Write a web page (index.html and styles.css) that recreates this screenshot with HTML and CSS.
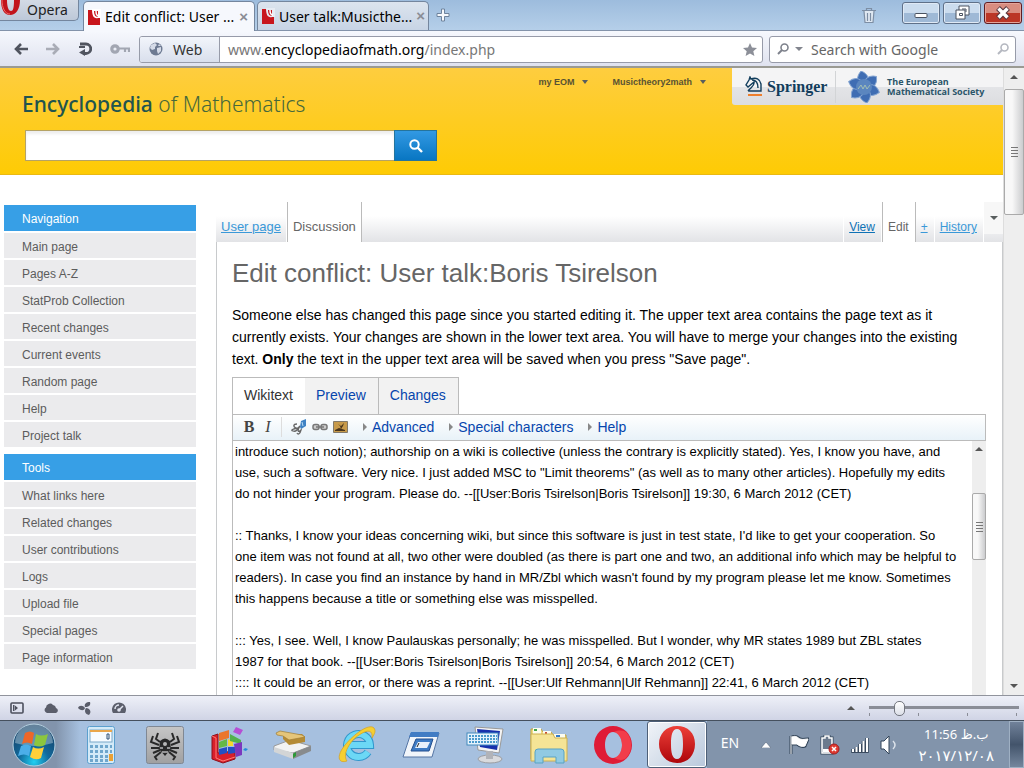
FILE: index.html
```html
<!DOCTYPE html>
<html lang="en">
<head>
<meta charset="utf-8">
<title>Edit conflict: User talk:Boris Tsirelson</title>
<link rel="stylesheet" href="styles.css">
</head>
<body>
<div class="desktop">
  <header class="titlebar">
    <button class="opera-menu"><svg width="22" height="16" viewBox="0 0 22 16"><path d="M1 0C1 9 4 15 10 15S20 9 20 0H14C14 8 13 11 11 11S7 8 7 0Z" fill="#c2141b"/><path d="M2 0C2 8 5 14 10 14" fill="none" stroke="#ef6b6b"/></svg>Opera</button>
    <div class="tab tab-active"><svg class="favicon" width="13" height="16" viewBox="0 0 13 16"><path d="M0 1H12V16H0Z" fill="#c8151c"/><path d="M4 0H13V9H10C6 10 4 7 4 0Z" fill="#fff"/><path d="M6 2H10V8C7 8 6 5 6 2Z" fill="#c8151c"/><path d="M8 2C8 5 9 7 11 7" fill="none" stroke="#fff" stroke-width="1.500"/></svg><span>Edit conflict: User ...</span><button class="tab-close" aria-label="Close tab">×</button></div>
    <div class="tab"><svg class="favicon" width="13" height="16" viewBox="0 0 13 16"><path d="M0 1H12V16H0Z" fill="#c8151c"/><path d="M4 0H13V9H10C6 10 4 7 4 0Z" fill="#e6ebf3"/><path d="M6 2H10V8C7 8 6 5 6 2Z" fill="#c8151c"/><path d="M8 2C8 5 9 7 11 7" fill="none" stroke="#fff" stroke-width="1.500"/></svg><span>User talk:Musicthe...</span><button class="tab-close" aria-label="Close tab">×</button></div>
    <button class="plain new-tab" aria-label="New tab"><svg width="14" height="14" viewBox="0 0 14 14"><path d="M5.500 1H8.500V5.500H13V8.500H8.500V13H5.500V8.500H1V5.500H5.500Z" fill="#f5f8fc" stroke="#6d829c"/></svg></button>
    <button class="plain trash" aria-label="Closed tabs"><svg width="16" height="17" viewBox="0 0 16 17"><path d="M3 4H13L12 16H4Z" fill="#dfe8f2"/><path d="M1 3.500H15M5.500 3V1.500H10.500V3M3 4L4 15.500H12L13 4M6.500 6V14M9.500 6V14" fill="none" stroke="#7d8ea4" stroke-width="1.200"/></svg></button>
    <div class="window-buttons">
      <button class="winbtn" aria-label="Minimize"><svg width="18" height="18" viewBox="0 0 18 18"><rect x="3" y="9.500" width="12" height="4" rx="1" fill="#fff" stroke="#4a5260"/></svg></button>
      <button class="winbtn" aria-label="Restore"><svg width="18" height="18" viewBox="0 0 18 18"><path d="M6 2H16V11H12V15H3V6H6Z" fill="#fff" stroke="#4a5260"/><path d="M6 6H12V11M9 5H13V8M6.500 9.500H9.500V11.500H6.500Z" fill="none" stroke="#4a5260"/></svg></button>
      <button class="winbtn winbtn-close" aria-label="Close"><svg width="18" height="18" viewBox="0 0 18 18"><path d="M4 4L14 14M14 4L4 14" stroke="#54343c" stroke-width="5.500"/><path d="M4.500 4.500L13.500 13.500M13.500 4.500L4.500 13.500" stroke="#fff" stroke-width="3.500"/></svg></button>
    </div>
  </header>

  <div class="addressbar">
    <button class="plain" aria-label="Back"><svg width="14" height="12" viewBox="0 0 14 12"><path d="M7 1L2 6L7 11M2 6H14" fill="none" stroke="#50545f" stroke-width="2.600"/></svg></button>
    <button class="plain" aria-label="Forward"><svg width="14" height="12" viewBox="0 0 14 12"><path d="M7 1L12 6L7 11M12 6H0" fill="none" stroke="#a9acb6" stroke-width="2.600"/></svg></button>
    <button class="plain" aria-label="Reload"><svg width="14" height="14" viewBox="0 0 14 14"><path d="M2 2H8A4.500 4.500 0 0 1 8 11.500H5" fill="none" stroke="#50545f" stroke-width="2.800"/><path d="M7 7V14L1 10.500Z" fill="#50545f"/><path d="M1 5H7" stroke="#50545f" stroke-width="2"/></svg></button>
    <button class="plain" aria-label="Key"><svg width="20" height="10" viewBox="0 0 20 10"><circle cx="5" cy="5" r="3.200" fill="none" stroke="#a2a6b2" stroke-width="3.200"/><path d="M8 4.500H19V8M15 5V8" fill="none" stroke="#a2a6b2" stroke-width="2.200"/></svg></button>
    <div class="field field-url">
      <button class="web-button"><svg width="14" height="14" viewBox="0 0 14 14"><circle cx="7" cy="7" r="6.500" fill="#6d7a92"/><path d="M2 3L6 1L8 3L6 5L6 7L3 8L1 6ZM8 6L12 5L12 9L9 12L8 9ZM10 2L12 4H9Z" fill="#d5dbe8"/></svg>Web</button>
      <span class="url">www.<b>encyclopediaofmath.org</b>/index.php</span>
      <button class="plain" aria-label="Bookmark"><svg width="14" height="13" viewBox="0 0 14 13"><path d="M7 0L9 4.500L14 5L10.300 8.300L11.400 13L7 10.500L2.600 13L3.700 8.300L0 5L5 4.500Z" fill="#8c8f98"/></svg></button>
    </div>
    <div class="field field-search">
      <svg width="12" height="12" viewBox="0 0 12 12"><circle cx="7.500" cy="4.500" r="3.500" fill="none" stroke="#7e828c" stroke-width="1.600"/><path d="M5 7L1 11" stroke="#7e828c" stroke-width="2"/></svg>
      <svg width="8" height="4" viewBox="0 0 8 4"><path d="M0 0H8L4 4Z" fill="#82858e"/></svg>
      <input type="text" class="google" placeholder="Search with Google" aria-label="Search with Google">
      <svg width="12" height="12" viewBox="0 0 12 12"><circle cx="7.500" cy="4.500" r="3.500" fill="none" stroke="#b5b8c0" stroke-width="1.600"/><path d="M5 7L1 11" stroke="#b5b8c0" stroke-width="2"/></svg>
    </div>
  </div>

  <div class="viewport">
    <div class="page">
      <header class="site-header">
        <div class="brand">
          <div class="site-name"><b>Encyclopedia</b> of Mathematics</div>
          <form class="site-search"><input type="text" aria-label="Search the encyclopedia"><button type="button" aria-label="Search"><svg width="14" height="14" viewBox="0 0 14 14"><circle cx="5.500" cy="5.500" r="4.200" fill="none" stroke="#fff" stroke-width="2"/><path d="M8.500 8.500L13 13" stroke="#fff" stroke-width="2.400"/></svg></button></form>
        </div>
        <div class="user-menus"><button class="menu">my EOM<i class="caret"></i></button><button class="menu">Musictheory2math<i class="caret"></i></button></div>
        <div class="partners">
          <a href="#" class="springer"><svg width="18" height="21" viewBox="0 0 18 21"><path d="M3 15H16V8C15 3 11 1 6 3L5 1L4 4L1 9L3 11L9 6C10 10 6 11 3 15M7 4C12 4 13 8 13 12" fill="none" stroke="#123d5c" stroke-width="1.400"/><path d="M3 19H17" stroke="#ee7f2d" stroke-width="2"/></svg>Springer</a>
          <a href="#" class="ems"><svg width="34" height="32" viewBox="0 0 34 32"><defs><path id="petal" d="M17 16C9 12 9 6 14 0C22 3 24 10 17 16Z"/></defs><g fill="#3f6db3" stroke="#86a6d2" stroke-width="1"><use href="#petal"/><use href="#petal" transform="rotate(60 17 16)"/><use href="#petal" transform="rotate(120 17 16)"/><use href="#petal" transform="rotate(180 17 16)"/><use href="#petal" transform="rotate(240 17 16)"/><use href="#petal" transform="rotate(300 17 16)"/></g><circle cx="17" cy="16" r="8" fill="#5b86bf"/><path d="M11 18L14 14L16 18L18 14L20 18L23 14" fill="none" stroke="#a3bfb4"/></svg><span>The European<br>Mathematical Society</span></a>
        </div>
      </header>
      <div class="columns">
        <nav class="sidebar">
          <h2>Navigation</h2>
          <ul><li><a href="#">Main page</a></li><li><a href="#">Pages A-Z</a></li><li><a href="#">StatProb Collection</a></li><li><a href="#">Recent changes</a></li><li><a href="#">Current events</a></li><li><a href="#">Random page</a></li><li><a href="#">Help</a></li><li><a href="#">Project talk</a></li></ul>
          <h2>Tools</h2>
          <ul><li><a href="#">What links here</a></li><li><a href="#">Related changes</a></li><li><a href="#">User contributions</a></li><li><a href="#">Logs</a></li><li><a href="#">Upload file</a></li><li><a href="#">Special pages</a></li><li><a href="#">Page information</a></li></ul>
        </nav>
        <main class="main">
          <div class="page-tabs">
            <div class="namespaces"><a href="#" class="ptab">User page</a><a href="#" class="ptab ptab-on">Discussion</a></div>
            <span class="grow"></span>
            <div class="views"><a href="#" class="ptab ptab-view">View</a><a href="#" class="ptab ptab-on">Edit</a><a href="#" class="ptab">+</a><a href="#" class="ptab">History</a></div><button class="more" aria-label="More actions"><i class="caret"></i></button>
          </div>
          <div class="content">
            <h1>Edit conflict: User talk:Boris Tsirelson</h1>
            <p>Someone else has changed this page since you started editing it. The upper text area contains the page text as it currently exists. Your changes are shown in the lower text area. You will have to merge your changes into the existing text. <b>Only</b> the text in the upper text area will be saved when you press "Save page".</p>
            <div class="editor-tabs"><button class="etab etab-on">Wikitext</button><button class="etab">Preview</button><button class="etab">Changes</button></div>
            <div class="toolbar">
              <button class="plain bold" aria-label="Bold">B</button><button class="plain italic" aria-label="Italic">I</button><span class="divider"></span>
              <button class="plain" aria-label="Signature"><svg width="16" height="16" viewBox="0 0 16 16"><path d="M6 5C2 5 2 8 5 9S5 13 2 12S2 10 7 9L9 7C6 12 7 14 10 11C9 15 7 16 6 14" fill="none" stroke="#666" stroke-width="1.300"/><path d="M10 2L15 0V7L10 10L9 8Z" fill="#3f82c4"/><path d="M11 3L12 7" stroke="#b9dcf4"/></svg></button>
              <button class="plain" aria-label="Link"><svg width="16" height="8" viewBox="0 0 16 8"><rect x="1" y="1.500" width="6" height="5" rx="2" fill="#ccc" stroke="#777" stroke-width="1.500"/><rect x="9" y="1.500" width="6" height="5" rx="2" fill="#ccc" stroke="#777" stroke-width="1.500"/><path d="M4 4H12" stroke="#777" stroke-width="1.500"/></svg></button>
              <button class="plain" aria-label="Embedded file"><svg width="15" height="12" viewBox="0 0 15 12"><path d="M.500 .500H14.500V11.500H.500Z" fill="#c79a4a" stroke="#827a6b"/><path d="M2 9L6 7L12 9V10H2ZM5 3L8 5L11 2L10 5L8 8L7 5Z" fill="#49351c"/></svg></button>
              <a href="#" class="section">Advanced</a><a href="#" class="section">Special characters</a><a href="#" class="section">Help</a>
            </div>
            <div class="edit-area">
              <textarea aria-label="Page text" wrap="off">introduce such notion); authorship on a wiki is collective (unless the contrary is explicitly stated). Yes, I know you have, and
use, such a software. Very nice. I just added MSC to "Limit theorems" (as well as to many other articles). Hopefully my edits
do not hinder your program. Please do. --[[User:Boris Tsirelson|Boris Tsirelson]] 19:30, 6 March 2012 (CET)

:: Thanks, I know your ideas concerning wiki, but since this software is just in test state, I'd like to get your cooperation. So
one item was not found at all, two other were doubled (as there is part one and two, an additional info which may be helpful to
readers). In case you find an instance by hand in MR/Zbl which wasn't found by my program please let me know. Sometimes
this happens because a title or something else was misspelled.

::: Yes, I see. Well, I know Paulauskas personally; he was misspelled. But I wonder, why MR states 1989 but ZBL states
1987 for that book. --[[User:Boris Tsirelson|Boris Tsirelson]] 20:54, 6 March 2012 (CET)
:::: It could be an error, or there was a reprint. --[[User:Ulf Rehmann|Ulf Rehmann]] 22:41, 6 March 2012 (CET)</textarea>
              <div class="scroll scroll-inner"><i class="arrow-up"></i><div class="thumb"><i class="grip"></i></div></div>
            </div>
          </div>
        </main>
      </div>
    </div>
    <div class="scroll scroll-page"><i class="arrow-up"></i><div class="thumb"><i class="grip"></i></div><i class="arrow-down"></i></div>
  </div>

  <footer class="statusbar">
    <button class="plain" aria-label="Panels"><svg width="14" height="12" viewBox="0 0 14 12"><rect x="1" y="1" width="12" height="10" rx="1" fill="none" stroke="#4d505e" stroke-width="1.600"/><path d="M3 3H4.500V9H3ZM5 3.500L8 6L5 8.500Z" fill="#4d505e"/></svg></button>
    <button class="plain" aria-label="Sync"><svg width="14" height="10" viewBox="0 0 14 10"><path d="M3 10A3 3 0 0 1 2 4.500A4 4 0 0 1 9 2A3.500 3.500 0 0 1 12 5A2.600 2.600 0 0 1 12 10Z" fill="#5b5e6b"/></svg></button>
    <button class="plain" aria-label="Share"><svg width="14" height="13" viewBox="0 0 14 13"><path d="M7 5C6 2 8 0 12 0C13 3 11 5 7 5ZM7 6C6 9 3 9 0 6C1 3 5 3 7 6ZM8 6C12 6 14 10 11 13C7 12 6 9 8 6Z" fill="#5b5e6b"/></svg></button>
    <button class="plain" aria-label="Turbo"><svg width="14" height="12" viewBox="0 0 14 12"><path d="M1 11A7 7 0 1 1 13 11Z" fill="#5b5e6b"/><path d="M3 7A4 4 0 0 1 7 3M7 8L11 4" fill="none" stroke="#e1e4f0" stroke-width="1.500"/><circle cx="7" cy="8" r="1.800" fill="#e1e4f0"/></svg></button>
    <span class="grow"></span>
    <i class="arrow-up"></i>
    <input type="range" class="zoom" min="0" max="100" value="18" aria-label="Zoom">
  </footer>

  <div class="taskbar">
    <button class="start" aria-label="Start"><svg width="44" height="44" viewBox="0 0 44 44"><defs><radialGradient id="orb" cx=".5" cy=".9" r=".9"><stop offset="0" stop-color="#22d0f2"/><stop offset=".4" stop-color="#126a9d"/><stop offset="1" stop-color="#163a5e"/></radialGradient></defs><circle cx="22" cy="22" r="21" fill="url(#orb)" stroke="#b4d0e1"/><path d="M3 20A19 19 0 0 1 41 20Q22 26 3 20Z" fill="#c4d7e3" opacity=".45"/><path d="M13 10Q18 7 22 10L20 21Q15 18 10 21Z" fill="#ee6728"/><path d="M24 11Q29 14 36 11L33 22Q27 25 22 22Z" fill="#8cc63e"/><path d="M9 23Q14 20 19 23L17 33Q12 30 6 33Z" fill="#4baee9"/><path d="M21 24Q26 27 32 24L29 35Q24 38 18 34Z" fill="#ffd03a"/></svg></button>
    <button class="task" aria-label="Calculator"><svg width="28" height="38" viewBox="0 0 28 38"><rect x=".5" y=".5" width="27" height="37" rx="2" fill="#d4eaf8" stroke="#5a9fce"/><rect x="3" y="4" width="22" height="12" fill="#f7fbff" stroke="#78a7c8"/><path d="M3 4H25V6H3Z" fill="#eaa64a"/><path d="M20 8H22V13H20Z" fill="none" stroke="#315174"/><path d="M3 20.500H25M3 25.500H25M3 30.500H21M3 34.500H21" stroke="#6fa6cc" stroke-width="3" stroke-dasharray="3 2"/><rect x="22" y="28" width="4" height="7" fill="#eaa135"/></svg></button>
    <button class="task" aria-label="Antivirus"><svg width="38" height="38" viewBox="0 0 38 38"><defs><linearGradient id="steel" x2="0" y2="1"><stop stop-color="#c6c6c6"/><stop offset="1" stop-color="#a0a0a1"/></linearGradient></defs><rect x=".5" y=".5" width="37" height="37" rx="2" fill="url(#steel)" stroke="#808893"/><g fill="none" stroke="#292929" stroke-width="2"><path d="M14 16L10 13L12 7M24 16L28 13L26 7M13 19L5 16L7 10M25 19L33 16L31 10M13 22H5M25 22H33M14 24L7 27M24 24L31 27M15 26L9 31L11 34M23 26L29 31L27 34"/></g><path d="M14 15Q19 10 24 15L25 23L19 30L13 23Z" fill="#292929"/><path d="M14 22H17M21 22H24M16 26H22" stroke="#b7b7b8" stroke-width="1.500"/><circle cx="19" cy="18" r="2" fill="#b7b7b8"/></svg></button>
    <button class="task" aria-label="Defragmenter"><svg width="38" height="38" viewBox="0 0 38 38"><path d="M2 10L8 8V27L25 25V33L13 37L2 33Z" fill="#d91f2b" stroke="#8e101b"/><path d="M2 10L6 12V32L13 35L25 31" fill="none" stroke="#ff7b72"/><path d="M9 7L19 4V12L9 15Z" fill="#eb762d"/><path d="M9 16L17 13V20L9 22Z" fill="#65b946"/><path d="M18 13L23 15V20L18 20Z" fill="#f6d62e"/><path d="M9 23L17 21V27L9 29ZM18 21H25V27L18 28Z" fill="#244fc3"/><path d="M20 8L31 14V18L20 15Z" fill="#53b14b"/><path d="M26 1L33 4L30 9L23 6Z" fill="#b64fd4"/><path d="M24 18L32 16V29L26 31Z" fill="#7b38be"/><path d="M35 22L38 23L36 25L33 24Z" fill="#248bdc"/></svg></button>
    <button class="task" aria-label="Drive"><svg width="40" height="30" viewBox="0 0 40 30"><path d="M1 16L17 10L38 16L20 23L1 20Z" fill="#f2f3f3" stroke="#999"/><path d="M1 17V22L20 29V23Z" fill="#d3d5d6"/><path d="M20 23L38 16V21L20 29Z" fill="#888b8d"/><path d="M10 5L29 4L32 7V12L16 15L10 9Z" fill="#b48b35"/><path d="M3 3L7 1L29 5L32 7L16 10L10 6L4 5Z" fill="#e5c579" stroke="#a17d34" stroke-width=".7"/><path d="M20 24L23 22V26L20 28Z" fill="#2c9b36"/></svg></button>
    <button class="task" aria-label="Internet Explorer"><svg width="40" height="40" viewBox="0 0 40 40"><path d="M31 27A11.500 11.500 0 1 1 33 20H12" fill="none" stroke="#3197cd" stroke-width="8"/><path d="M31 27A11.500 11.500 0 1 1 33 20H12" fill="none" stroke="#6cd8f5" stroke-width="6"/><path d="M10 36C1 39 -1 31 8 20S32 -2 37 3C39 6 38 8 35 13C36 5 31 4 22 10S5 29 10 36Z" fill="#f5cf32" stroke="#d5a11f" stroke-width=".7"/></svg></button>
    <button class="task" aria-label="Run"><svg width="38" height="28" viewBox="0 0 38 28"><path d="M9 2H37L30 26H1Z" fill="#f1f5fa" stroke="#5575a4"/><path d="M9 1H37L36 6H7Z" fill="#417cc4"/><path d="M14 8H31L27 20H9Z" fill="#3d7bc4" stroke="#244f8e"/><path d="M16 11H28L25 17H13Z" fill="#e8f1fb"/><path d="M17 12L15 16" stroke="#222"/></svg></button>
    <button class="task" aria-label="On-screen keyboard"><svg width="38" height="38" viewBox="0 0 38 38"><path d="M9 1L37 3L33 27L12 24Z" fill="#f4f4f4" stroke="#999"/><path d="M11 3L34 5L31 24L14 21Z" fill="#1730ac"/><ellipse cx="24" cy="33" rx="12" ry="4" fill="#d9dadd" stroke="#9b9da2"/><path d="M20 25H27V33H20Z" fill="#b1b3b8"/><rect x="1" y="7" width="31" height="12" fill="#e6f3fc" stroke="#438abd"/><path d="M3 10H31M3 13H31M3 16H31" stroke="#4a9acc" stroke-width="2" stroke-dasharray="2 1"/></svg></button>
    <button class="task" aria-label="Explorer"><svg width="40" height="38" viewBox="0 0 40 38"><path d="M2 3H12L14 6H22L24 9H37V33H2Z" fill="#f0dc83" stroke="#c2a33f"/><path d="M4 2H12V8H4ZM14 5H22V9H14ZM25 8H36V12H25Z" fill="#fcfcef"/><path d="M5 3H8V5H5Z" fill="#41a447"/><path d="M16 6H18V8H16Z" fill="#cc4e37"/><path d="M27 9H31V11H27Z" fill="#347bc8"/><path d="M2 8H24L26 12H38V35H2Z" fill="#f5e496" stroke="#ccb050"/><path d="M6 37V26Q6 23 9 23H32Q35 23 35 26V37H27V31H14V37Z" fill="#91cae3" stroke="#59a3c3"/></svg></button>
    <button class="task" aria-label="Opera"><svg width="40" height="40" viewBox="0 0 40 40"><path fill-rule="evenodd" d="M20 1A19 19 0 1 0 20 39A19 19 0 1 0 20 1ZM20 7C25 7 29 13 29 20S25 33 20 33S12 27 12 20S15 7 20 7Z" fill="#df1b36"/><path d="M21 7C27 4 31 6 33 7A19 19 0 0 1 33 33C31 35 27 36 21 33C27 31 29 25 29 20S27 9 21 7Z" fill="#ff5559" opacity=".6"/></svg></button>
    <button class="task task-active" aria-label="Opera browser"><svg width="38" height="40" viewBox="0 0 38 40"><defs><linearGradient id="red" x2="0" y2="1"><stop stop-color="#ed4038"/><stop offset="1" stop-color="#ad050b"/></linearGradient></defs><path fill-rule="evenodd" d="M19 1C8 1 1 9 1 19S8 38 19 38S37 30 37 19S30 1 19 1ZM19 4C24 4 25 11 25 19S24 34 19 34S13 27 13 19S14 4 19 4Z" fill="url(#red)"/></svg></button>
    <div class="tray">
      <button class="plain lang">EN</button>
      <button class="plain hidden-icons" aria-label="Show hidden icons"><svg width="10" height="6" viewBox="0 0 10 6"><path d="M0 6L5 0L10 6Z" fill="#fff" stroke="#45576d" stroke-width=".5"/></svg></button>
      <button class="plain" aria-label="Action center"><svg width="20" height="20" viewBox="0 0 20 20"><path d="M2 1V19M3 2C7 0 9 3 11 4C14 5 16 4 19 4L16 11C13 12 10 11 8 9L3 9Z" fill="#fff" stroke="#334559" stroke-width="3"/><path d="M2 1V19M3 2C7 0 9 3 11 4C14 5 16 4 19 4L16 11C13 12 10 11 8 9L3 9Z" fill="#fff" stroke="#fff" stroke-width="1"/></svg></button>
      <button class="plain" aria-label="Battery"><svg width="20" height="20" viewBox="0 0 20 20"><path d="M2 3H5V1H9V3H12V18H2Z" fill="#6b7a8d" stroke="#334559" stroke-width="3"/><path d="M2 3H5V1H9V3H12V18H2Z" fill="#6b7a8d" stroke="#fff" stroke-width="1.500"/><path d="M3 14H11V17H3Z" fill="#fff"/><circle cx="14" cy="14" r="5" fill="#df3b31" stroke="#a41d20"/><path d="M12 12L16 16M16 12L12 16" stroke="#fff" stroke-width="1.500"/></svg></button>
      <button class="plain" aria-label="Network"><svg width="18" height="16" viewBox="0 0 18 16"><path d="M2 16V12M5.500 16V10M9 16V7M12.500 16V4M16 16V1" stroke="#39495d" stroke-width="3.500"/><path d="M2 15V12M5.500 15V10M9 15V7M12.500 15V4M16 15V1" stroke="#fff" stroke-width="2"/></svg></button>
      <button class="plain" aria-label="Volume"><svg width="18" height="20" viewBox="0 0 18 20"><path d="M1 6H4L9 1V19L4 14H1Z" fill="#fff" stroke="#334559"/><path d="M13 6Q17 10 13 14" fill="none" stroke="#dbe2ea" stroke-width="1.500"/></svg></button>
      <button class="clock" dir="rtl"><span>ب.ظ 11:56</span><span class="date">۲۰۱۷/۱۲/۰۸</span></button>
      <button class="show-desktop" aria-label="Show desktop"></button>
    </div>
  </div>
</div>
</body>
</html>
```
FILE: styles.css
```css
* { box-sizing: border-box; }
body { margin: 0; font-family: "Liberation Sans", Arial, sans-serif; color: #000; background: #fff; }
button, input, textarea { font: inherit; margin: 0; }
button { cursor: pointer; padding: 0; }
svg { display: block; flex: none; }
h1, h2, p, ul { margin: 0; padding: 0; font-weight: normal; }
ul { list-style: none; }
.desktop { display: flex; flex-direction: column; height: 100vh; overflow: hidden; }
.grow { flex: 1; }
.plain { border: 0; background: none; display: flex; align-items: center; justify-content: center; flex: none; }

/* Browser chrome */
.titlebar { display: flex; flex: none; height: 31px; align-items: flex-end; background: linear-gradient(#9dbcdd, #b5cfe9); border-bottom: 1px solid #8393aa; font-family: "Noto Sans", sans-serif; font-size: 14px; padding-right: 2px; }
.opera-menu { align-self: flex-start; display: flex; align-items: flex-start; gap: 5px; width: 79px; height: 21px; margin-right: 4px; border: 1px solid #74869e; border-top: 0; border-left: 0; border-radius: 0 0 5px 0; background: linear-gradient(#d3dae5, #bdc8d8); color: #222; line-height: 20px; }
.tab { display: flex; align-items: center; gap: 4px; width: 172px; height: 29px; margin-right: 2px; padding: 0 6px 0 4px; border: 1px solid #74869e; border-bottom: 0; border-radius: 5px 5px 0 0; background: linear-gradient(#dce4ee, #c7d4e5); white-space: nowrap; }
.tab-active { background: #f6f8fd; margin-bottom: -1px; height: 30px; }
.tab span { flex: 1; }
.tab-close { border: 0; background: none; color: #8a8d95; font: bold 15px/20px "Liberation Sans", sans-serif; }
.new-tab { align-self: center; margin-left: 5px; }
.trash { align-self: center; margin-left: auto; margin-right: 25px; }
.window-buttons { display: flex; gap: 3px; align-self: flex-start; padding-top: 2px; }
.winbtn { width: 38px; height: 22px; display: flex; align-items: center; justify-content: center; border: 1px solid #5f7088; border-radius: 3px; background: linear-gradient(#cbdcee 48%, #9fb9d6 52%); box-shadow: inset 0 0 0 1px #dfe9f5; }
.winbtn-close { background: linear-gradient(#d98d80 48%, #bb3626 52%); border-color: #601d22; box-shadow: inset 0 0 0 1px #e3a59b; }
.addressbar { display: flex; flex: none; align-items: center; height: 37px; padding: 1px 8px 0 14px; gap: 18px; background: linear-gradient(#f6f8fd, #dfe2ef); border-bottom: 2px solid #9a9a93; font-family: "Noto Sans", sans-serif; font-size: 14px; }
.field { display: flex; align-items: center; height: 27px; border: 1px solid #979ba9; border-radius: 3px; background: #fff; overflow: hidden; }
.field-url { flex: 1; margin-left: -9px; padding-right: 5px; }
.field-search { flex: none; width: 247px; margin-left: -12px; padding: 0 6px 0 7px; gap: 6px; }
.web-button { display: flex; align-items: center; gap: 10px; width: 80px; height: 100%; padding-left: 9px; border: 0; border-right: 1px solid #979ba9; background: linear-gradient(#f2f5fb, #d9dfec); color: #333; }
.url { flex: 1; padding-left: 8px; color: #777; }
.url b { font-weight: normal; color: #000; }
.google { flex: 1; min-width: 0; border: 0; padding: 0 0 0 2px; background: none; outline: 0; }
.google::placeholder { color: #666; opacity: 1; }

.viewport { flex: 1; min-height: 0; display: flex; }
.page { flex: 1; min-width: 0; display: flex; flex-direction: column; }

/* Site header */
.site-header { flex: none; display: flex; align-items: flex-start; height: 107px; background: linear-gradient(#fecd3f, #fecb04); border-bottom: 1px solid #eab913; }
.brand { flex: 1; padding: 23px 0 0 25px; }
.site-name { margin-left: -3px; font: 21px/26px "Noto Sans", sans-serif; font-weight: 300; color: #46683b; white-space: nowrap; }
.site-name b { font-weight: 500; color: #21544f; }
.site-search { display: flex; width: 412px; height: 31px; margin-top: 13px; }
.site-search input { flex: 1; min-width: 0; border: 1px solid #b5a365; border-right: 0; background: #fff; box-shadow: inset 0 3px 3px #eee; }
.site-search button { width: 43px; display: flex; align-items: center; justify-content: center; border: 1px solid #24749d; background: linear-gradient(#3299e3, #0876c2); }
.user-menus { display: flex; gap: 24px; padding: 7px 26px 0 0; }
.menu { display: flex; align-items: center; gap: 8px; border: 0; background: none; color: #595233; font-size: 9px; line-height: 14px; font-weight: bold; }
.caret { display: block; border: 3px solid transparent; border-top: 4px solid #595e5e; border-bottom: 0; }
.partners { display: flex; align-items: center; height: 37px; width: 271px; background: linear-gradient(#f4f4f5 50%, #e3e4e7 52%, #dcdde0); border-radius: 0 0 0 3px; }
.partners a { display: flex; align-items: center; text-decoration: none; color: #123d5c; height: 32px; }
.springer { width: 104px; padding-left: 13px; gap: 4px; font: bold 16px/24px "Liberation Serif", serif; border-right: 1px solid #d2d4d6; }
.ems { padding-left: 11px; gap: 6px; font: bold 9px/10px "Open Sans", sans-serif; white-space: nowrap; }
.partners .ems { color: #2b5569; }

/* Body columns */
.columns { flex: 1; min-height: 0; display: flex; gap: 20px; padding-left: 4px; }
.sidebar { flex: none; width: 192px; padding-top: 30px; font-size: 12px; }
.sidebar h2 { height: 26px; padding-left: 18px; font-size: 12px; line-height: 28px; color: #fff; background: #379fe6; }
.sidebar ul { margin-bottom: 7px; }
.sidebar li { padding-top: 2px; }
.sidebar a { display: block; height: 25px; padding-left: 18px; line-height: 28px; color: #5c5c5c; background: #ebebed; text-decoration: none; }
.main { flex: 1; min-width: 0; display: flex; flex-direction: column; padding-top: 27px; }
.page-tabs { flex: none; display: flex; height: 40px; background: linear-gradient(#fff 35%, #e2e3e6); }
.namespaces, .views { display: flex; font-size: 12px; }
.namespaces { font-size: 13px; }
.ptab { padding: 16px 5px 0; line-height: 18px; color: #3a99d8; border-right: 1px solid #fff; }
.views .ptab { padding-right: 6px; }
.views .ptab-view { color: #0f72b5; border-left: 1px solid #fff; }
.page-tabs .ptab-on { background: #fff; color: #666; border-left: 1px solid #bbb; border-right: 1px solid #bbb; text-decoration: none; }
.more { width: 19px; height: 32px; display: flex; align-items: center; justify-content: center; border: 0; background: #f7f7f7; }
.more .caret { border-width: 4px 4px 0; }
.content { flex: 1; min-height: 0; display: flex; flex-direction: column; padding: 16px 16px 0 15px; border: solid #c8cacc; border-width: 0 1px; }
h1 { flex: none; font-size: 26px; line-height: 30px; color: #666; }
.content p { flex: none; margin-top: 16px; font-size: 14px; line-height: 22px; }
.editor-tabs { flex: none; align-self: flex-start; display: flex; margin-top: 7px; border: 1px solid #bbb; border-bottom: 0; }
.etab { height: 36px; padding: 0 12px 2px 11px; border: 0; border-right: 1px solid #bbb; background: #f2f2f2; color: #0645ad; font-size: 14px; }
.etab-on { background: #fff; color: #333; border-right: 0; }
.etab:last-child { border-right: 0; }
.toolbar { flex: none; display: flex; align-items: center; height: 27px; padding: 0 0 2px 9px; border: 1px solid #bbb; background: linear-gradient(#fff, #e8f2f8); font-size: 14px; gap: 5px; }
.bold, .italic { width: 14px; color: #444; font: bold 16px/20px "Liberation Serif", serif; }
.italic { font-style: italic; font-weight: normal; }
.divider { width: 1px; height: 20px; margin: 0 4px 0 1px; background: #ddd; }
.section { color: #0645ad; text-decoration: none; display: flex; align-items: center; gap: 5px; margin-left: 10px; }
.section::before { content: ""; border: 4px solid transparent; border-left-color: #888; border-right: 0; }
.edit-area { flex: 1; min-height: 0; display: flex; border-left: 1px solid #bbb; }
.edit-area textarea { flex: 1; min-width: 0; border: 0; outline: 0; resize: none; padding: 0 2px; overflow: hidden; font-size: 13px; line-height: 21px; white-space: pre; color: #000; }

/* Scrollbars */
.scroll { flex: none; display: flex; flex-direction: column; align-items: center; background: #eee; }
.scroll-inner { width: 14px; padding-top: 6px; }
.scroll-page { width: 21px; padding: 7px 0; border-left: 1px solid #ddd; }
.arrow-up { border: 4px solid transparent; border-bottom-color: #555; border-top: 0; }
.arrow-down { border: 4px solid transparent; border-top-color: #555; border-bottom: 0; margin-top: auto; }
.thumb { width: 100%; display: flex; align-items: center; justify-content: center; border: 1px solid #aaa; border-radius: 2px; background: linear-gradient(90deg, #f8f8f8 40%, #cbccce); }
.scroll-inner .thumb { height: 67px; margin-top: 42px; }
.scroll-page .thumb { height: 126px; margin-top: 10px; }
.grip { width: 7px; height: 10px; background: repeating-linear-gradient(#777 0 1px, transparent 1px 3px); }

/* Status bar */
.statusbar { flex: none; display: flex; align-items: center; height: 25px; padding: 0 5px 0 10px; gap: 20px; background: linear-gradient(#eef0f8, #d0d4e5); border-top: 1px solid #91949d; }
.zoom { appearance: none; width: 150px; height: 16px; margin: 0; background: linear-gradient(#8a8d97, #8a8d97) 0 6px / 100% 3px no-repeat, repeating-linear-gradient(90deg, #8a8d97 0 1px, transparent 1px 49px) 0 13px / 100% 3px no-repeat; }
.zoom::-webkit-slider-thumb { appearance: none; width: 11px; height: 15px; border: 1px solid #73767f; border-radius: 5px; background: linear-gradient(#fff, #dcdfe8); }
.statusbar .arrow-up { margin-right: -6px; }

/* Taskbar */
.taskbar { flex: none; display: flex; align-items: stretch; height: 48px; gap: 4px; background: linear-gradient(90deg, #8294ac 56px, #a6c0df 80px); border-top: 1px solid #45505e; }
.start { width: 67px; display: flex; align-items: center; justify-content: center; border: 0; background: none; }
.task { width: 60px; display: flex; align-items: center; justify-content: center; border: 0; background: none; }
.task-active { background: linear-gradient(135deg, #f1f4f8, #b9c8dc); border: 1px solid #4d5f77; border-radius: 3px; box-shadow: inset 0 0 0 1px #fff; }
.tray { flex: 1; display: flex; align-items: center; gap: 11px; margin-left: -4px; padding-left: 13px; background: #8294ab; font-family: "Noto Sans", sans-serif; color: #fff; }
.lang { color: #fff; font-size: 14px; width: 20px; padding-bottom: 4px; }
.hidden-icons { margin: 0 7px 0 10px; }
.clock { display: flex; flex-direction: column; align-items: center; margin: 0 0 0 auto; padding: 0 4px; border: 0; background: none; color: #fff; font: 13px/21px "Noto Sans", "DejaVu Sans", sans-serif; white-space: nowrap; }
.date { font-size: 15px; }
.show-desktop { align-self: stretch; width: 15px; border: 1px solid #9fb0c3; background: linear-gradient(#71829a, #43546b 50%, #74869d); }
```
